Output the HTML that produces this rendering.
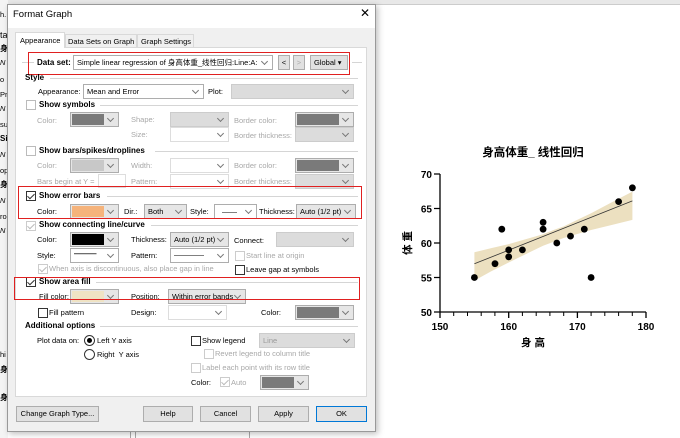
<!DOCTYPE html>
<html><head><meta charset="utf-8">
<style>
*{margin:0;padding:0;box-sizing:border-box}
body{width:680px;height:438px;overflow:hidden;background:#fff;position:relative;font-family:"Liberation Sans","Noto Sans CJK SC",sans-serif;font-size:7.5px;color:#000}
div{position:absolute}
.t{white-space:nowrap;line-height:10px}
.g{color:#a8a8a8}
.b{font-weight:bold;font-size:8px}
.cb{height:15px;border:1px solid #adadad;background:#fff;}
.cb.d{background:#dcdcdc;border-color:#ccc}
.cb:after{content:"";position:absolute;right:5px;top:3px;width:4px;height:4px;border-right:1px solid #777;border-bottom:1px solid #777;transform:rotate(45deg)}
.cb span{position:absolute;left:3px;top:2px;white-space:nowrap;line-height:10px}
.sw{height:15px;border:1px solid #adadad;background:#e6e6e6}
.sw i{position:absolute;left:1px;top:1px;bottom:1px;right:14px;display:block}
.sw:after{content:"";position:absolute;right:5px;top:3px;width:4px;height:4px;border-right:1px solid #777;border-bottom:1px solid #777;transform:rotate(45deg)}
.ck{width:10px;height:10px;border:1px solid #333;background:#fff}
.ck.d{border-color:#ccc}
.ck.c:after{content:"";position:absolute;left:2px;top:0px;width:3px;height:6px;border-right:1px solid #333;border-bottom:1px solid #333;transform:rotate(45deg)}
.ck.d.c:after{border-color:#bbb}
.hr{height:1px;background:#d5d5d5}
.red{border:1.5px solid #e02020}
.btn{height:16px;border:1px solid #adadad;background:#e1e1e1;text-align:center;line-height:14px}
</style></head><body>
<div style="left:0;top:0;width:680px;height:5px;background:#e8e8e8;border-bottom:1px solid #ccc"></div>
<div style="left:0;top:0;width:8px;height:438px;background:#f4f4f4"></div>
<div class="t" style="left:0;top:10px">h.</div>
<div class="t" style="left:0;top:30px;font-size:9px">ta</div>
<div class="t b" style="left:0;top:44px">身</div>
<div class="t" style="left:0;top:58px;font-style:italic">N</div>
<div class="t" style="left:0;top:75px">o</div>
<div class="t" style="left:0;top:90px">Pr</div>
<div class="t" style="left:0;top:104px;font-style:italic">N</div>
<div class="t" style="left:0;top:120px">su</div>
<div class="t b" style="left:0;top:134px">Si</div>
<div class="t" style="left:0;top:150px;font-style:italic">N</div>
<div class="t" style="left:0;top:166px">op</div>
<div class="t b" style="left:0;top:180px">身</div>
<div class="t" style="left:0;top:196px;font-style:italic">N</div>
<div class="t" style="left:0;top:212px">ro</div>
<div class="t" style="left:0;top:226px;font-style:italic">N</div>
<div class="t" style="left:0;top:350px">hi</div>
<div class="t b" style="left:0;top:365px">身</div>
<div class="t b" style="left:0;top:393px">身</div>
<div style="left:130px;top:430px;width:1px;height:8px;background:#aaa"></div>
<div style="left:135px;top:430px;width:115px;height:8px;border-left:1px solid #aaa;border-right:1px solid #aaa"></div>

<div style="left:7px;top:4px;width:369px;height:428px;background:#f0f0f0;border:1px solid #999;box-shadow:2px 2px 6px rgba(0,0,0,.25)"></div>
<div style="left:8px;top:5px;width:367px;height:23px;background:#fff"></div>
<div class="t" style="left:13px;top:10px;font-size:9.5px">Format Graph</div>
<div class="t" style="left:360px;top:8px;font-size:12px">✕</div>

<div style="left:15px;top:47px;width:352px;height:350px;background:#fff;border:1px solid #d9d9d9"></div>
<div style="left:15px;top:32px;width:50px;height:16px;background:#fff;border:1px solid #d9d9d9;border-bottom:none"></div>
<div class="t" style="left:20px;top:36px">Appearance</div>
<div style="left:65px;top:34px;width:72px;height:13px;background:#f0f0f0;border:1px solid #d9d9d9;border-bottom:none"></div>
<div class="t" style="left:68px;top:37px">Data Sets on Graph</div>
<div style="left:137px;top:34px;width:57px;height:13px;background:#f0f0f0;border:1px solid #d9d9d9;border-bottom:none"></div>
<div class="t" style="left:141px;top:37px">Graph Settings</div>

<div class="hr" style="left:22px;top:62px;width:340px"></div>
<div style="left:34px;top:55px;width:318px;height:16px;background:#fff"></div>
<div class="t b" style="left:37px;top:58px">Data set:</div>
<div class="cb" style="left:73px;top:55px;width:200px"><span>Simple linear regression of 身高体重_线性回归:Line:A:</span></div>
<div class="btn" style="left:278px;top:55px;width:12px;height:15px">&lt;</div>
<div class="btn" style="left:293px;top:55px;width:12px;height:15px;color:#aaa">&gt;</div>
<div class="btn" style="left:310px;top:55px;width:38px;height:15px;text-align:left;padding-left:3px">Global ▾</div>
<div class="red" style="left:28px;top:52px;width:322px;height:23px"></div>

<div class="t b" style="left:25px;top:73px">Style</div>
<div class="hr" style="left:50px;top:78px;width:308px"></div>
<div class="t" style="left:38px;top:87px">Appearance:</div>
<div class="cb" style="left:83px;top:84px;width:121px"><span>Mean and Error</span></div>
<div class="t" style="left:208px;top:87px">Plot:</div>
<div class="cb d" style="left:231px;top:84px;width:123px"></div>

<div class="ck" style="left:26px;top:100px;border-color:#bbb"></div>
<div class="t b" style="left:39px;top:100px">Show symbols</div>
<div class="hr" style="left:100px;top:105px;width:258px"></div>
<div class="t g" style="left:37px;top:116px">Color:</div>
<div class="sw" style="left:70px;top:112px;width:49px"><i style="background:#7a7a7a"></i></div>
<div class="t g" style="left:131px;top:115px">Shape:</div>
<div class="cb d" style="left:170px;top:112px;width:59px"></div>
<div class="t g" style="left:234px;top:116px">Border color:</div>
<div class="sw" style="left:295px;top:112px;width:59px"><i style="background:#7a7a7a"></i></div>
<div class="t g" style="left:131px;top:130px">Size:</div>
<div class="cb" style="left:170px;top:127px;width:59px;border-color:#ddd"></div>
<div class="t g" style="left:234px;top:131px">Border thickness:</div>
<div class="cb d" style="left:295px;top:127px;width:59px"></div>

<div class="ck" style="left:26px;top:146px;border-color:#bbb"></div>
<div class="t b" style="left:39px;top:146px">Show bars/spikes/droplines</div>
<div class="hr" style="left:155px;top:151px;width:203px"></div>
<div class="t g" style="left:37px;top:161px">Color:</div>
<div class="sw" style="left:70px;top:158px;width:49px"><i style="background:#c8c8c8"></i></div>
<div class="t g" style="left:131px;top:161px">Width:</div>
<div class="cb" style="left:170px;top:158px;width:59px;border-color:#ddd"></div>
<div class="t g" style="left:234px;top:161px">Border color:</div>
<div class="sw" style="left:295px;top:158px;width:59px"><i style="background:#7a7a7a"></i></div>
<div class="t g" style="left:37px;top:177px">Bars begin at Y =</div>
<div style="left:98px;top:174px;width:28px;height:14px;border:1px solid #ddd;background:#fff"></div>
<div class="t g" style="left:131px;top:177px">Pattern:</div>
<div class="cb" style="left:170px;top:174px;width:59px;border-color:#ddd"></div>
<div class="t g" style="left:234px;top:177px">Border thickness:</div>
<div class="cb d" style="left:295px;top:174px;width:59px"></div>

<div class="ck c" style="left:26px;top:191px"></div>
<div class="t b" style="left:39px;top:191px">Show error bars</div>
<div class="hr" style="left:107px;top:196px;width:251px"></div>
<div class="t" style="left:37px;top:207px">Color:</div>
<div class="sw" style="left:70px;top:204px;width:49px"><i style="background:#f5b37b"></i></div>
<div class="t" style="left:124px;top:207px">Dir.:</div>
<div class="cb" style="left:144px;top:204px;width:43px;background:#e6e6e6"><span>Both</span></div>
<div class="t" style="left:190px;top:207px">Style:</div>
<div class="cb" style="left:214px;top:204px;width:43px"><span style="left:7px">——</span></div>
<div class="t" style="left:259px;top:207px">Thickness:</div>
<div class="cb" style="left:296px;top:204px;width:60px;background:#e6e6e6"><span>Auto (1/2 pt)</span></div>
<div class="red" style="left:18px;top:186px;width:344px;height:33px"></div>

<div class="ck d c" style="left:26px;top:221px"></div>
<div class="t b" style="left:39px;top:220px">Show connecting line/curve</div>
<div class="hr" style="left:151px;top:225px;width:207px"></div>
<div class="t" style="left:37px;top:235px">Color:</div>
<div class="sw" style="left:70px;top:232px;width:49px"><i style="background:#000"></i></div>
<div class="t" style="left:131px;top:235px">Thickness:</div>
<div class="cb" style="left:170px;top:232px;width:59px;background:#e6e6e6"><span>Auto (1/2 pt)</span></div>
<div class="t" style="left:234px;top:236px">Connect:</div>
<div class="cb d" style="left:276px;top:232px;width:78px"></div>
<div class="t" style="left:37px;top:251px">Style:</div>
<div class="cb" style="left:70px;top:248px;width:49px"><span style="top:0;font-weight:bold">———</span></div>
<div class="t" style="left:131px;top:251px">Pattern:</div>
<div class="cb" style="left:170px;top:248px;width:59px"><span style="top:1px">————</span></div>
<div class="ck d" style="left:235px;top:251px"></div>
<div class="t g" style="left:246px;top:251px">Start line at origin</div>
<div class="ck d c" style="left:38px;top:264px"></div>
<div class="t g" style="left:49px;top:264px">When axis is discontinuous, also place gap in line</div>
<div class="ck" style="left:235px;top:265px"></div>
<div class="t" style="left:246px;top:265px">Leave gap at symbols</div>

<div class="ck c" style="left:26px;top:277px"></div>
<div class="t b" style="left:39px;top:277px">Show area fill</div>
<div class="hr" style="left:96px;top:282px;width:262px"></div>
<div class="t" style="left:39px;top:292px">Fill color:</div>
<div class="sw" style="left:70px;top:289px;width:49px"><i style="background:#efe3c4"></i></div>
<div class="t" style="left:131px;top:292px">Position:</div>
<div class="cb" style="left:168px;top:289px;width:78px;background:#e6e6e6"><span>Within error bands</span></div>
<div class="red" style="left:14px;top:277px;width:346px;height:23px"></div>

<div class="ck" style="left:38px;top:308px"></div>
<div class="t" style="left:49px;top:308px">Fill pattern</div>
<div class="t" style="left:131px;top:308px">Design:</div>
<div class="cb" style="left:168px;top:305px;width:59px;border-color:#ddd"></div>
<div class="t" style="left:261px;top:308px">Color:</div>
<div class="sw" style="left:295px;top:305px;width:59px"><i style="background:#7a7a7a"></i></div>

<div class="t b" style="left:25px;top:321px">Additional options</div>
<div class="hr" style="left:100px;top:326px;width:258px"></div>
<div class="t" style="left:37px;top:336px">Plot data on:</div>
<div style="left:84px;top:335px;width:11px;height:11px;border:1px solid #333;border-radius:50%;background:#fff"></div>
<div style="left:87px;top:338px;width:5px;height:5px;border-radius:50%;background:#000"></div>
<div class="t" style="left:97px;top:336px">Left Y axis</div>
<div style="left:84px;top:349px;width:11px;height:11px;border:1px solid #333;border-radius:50%;background:#fff"></div>
<div class="t" style="left:97px;top:350px">Right &nbsp;Y axis</div>
<div class="ck" style="left:191px;top:336px"></div>
<div class="t" style="left:202px;top:336px">Show legend</div>
<div class="cb d" style="left:259px;top:333px;width:96px"><span style="color:#999">Line</span></div>
<div class="ck d" style="left:204px;top:349px"></div>
<div class="t g" style="left:215px;top:349px">Revert legend to column title</div>
<div class="ck d" style="left:191px;top:363px"></div>
<div class="t g" style="left:202px;top:363px">Label each point with its row title</div>
<div class="t" style="left:191px;top:378px">Color:</div>
<div class="ck d c" style="left:220px;top:377px"></div>
<div class="t g" style="left:231px;top:378px">Auto</div>
<div class="sw" style="left:260px;top:375px;width:49px"><i style="background:#7a7a7a"></i></div>

<div class="btn" style="left:16px;top:406px;width:83px">Change Graph Type...</div>
<div class="btn" style="left:143px;top:406px;width:50px">Help</div>
<div class="btn" style="left:200px;top:406px;width:51px">Cancel</div>
<div class="btn" style="left:258px;top:406px;width:51px">Apply</div>
<div class="btn" style="left:316px;top:406px;width:51px;border:1.5px solid #0078d7">OK</div>

<svg style="position:absolute;left:0;top:0" width="680" height="438">
<text x="533" y="156" font-family="Liberation Sans,Noto Sans CJK SC,sans-serif" font-size="11.5" font-weight="bold" text-anchor="middle">身高体重_ 线性回归</text>
<path d="M474.4,252.3 Q491,248 508.7,244.1 Q526,239 543.1,234.2 Q553,230 563.7,226.4 Q577,220 591.1,213.3 Q612,202 632.4,191.6 L632.4,219.9 Q612,225 591.1,230 Q577,234 563.7,238 Q553,242 543.1,245.8 Q526,254 508.7,262.5 Q491,271 474.4,280.6 Z" fill="#ece0c0"/>
<line x1="474.4" y1="263.8" x2="632.4" y2="200.9" stroke="#333" stroke-width="0.8"/>
<g stroke="#000" stroke-width="1.3" fill="none">
<path d="M440,174 V312 H646"/>
<path d="M434,174H440M434,208.5H440M434,243H440M434,277.5H440M434,312H440"/>
<path d="M440,312v6M508.7,312v6M577.4,312v6M646,312v6"/>
</g>
<g stroke="#000" stroke-width="1">
<path d="M453.7,312v4M467.5,312v4M481.2,312v4M494.9,312v4M522.4,312v4M536.2,312v4M549.9,312v4M563.7,312v4M591.1,312v4M604.8,312v4M618.6,312v4M632.3,312v4"/>
</g>
<g fill="#000">
<circle cx="474.4" cy="277.5" r="3.4"/><circle cx="495" cy="263.7" r="3.4"/><circle cx="501.8" cy="229.2" r="3.4"/>
<circle cx="508.7" cy="256.8" r="3.4"/><circle cx="508.7" cy="249.9" r="3.4"/><circle cx="522.4" cy="249.9" r="3.4"/>
<circle cx="543.1" cy="222.3" r="3.4"/><circle cx="543.1" cy="229.2" r="3.4"/><circle cx="556.8" cy="243" r="3.4"/>
<circle cx="570.5" cy="236.1" r="3.4"/><circle cx="584.3" cy="229.2" r="3.4"/><circle cx="591.1" cy="277.5" r="3.4"/>
<circle cx="618.6" cy="201.6" r="3.4"/><circle cx="632.4" cy="187.8" r="3.4"/>
</g>
<g font-family="Liberation Sans,sans-serif" font-size="10" font-weight="bold" text-anchor="end">
<text x="432" y="178">70</text><text x="432" y="212.5">65</text><text x="432" y="247">60</text><text x="432" y="281.5">55</text><text x="432" y="316">50</text>
</g>
<g font-family="Liberation Sans,sans-serif" font-size="10" font-weight="bold" text-anchor="middle">
<text x="440" y="330">150</text><text x="508.7" y="330">160</text><text x="577.4" y="330">170</text><text x="646" y="330">180</text>
</g>
<text x="533" y="346" font-family="Liberation Sans,Noto Sans CJK SC,sans-serif" font-size="10.5" font-weight="bold" text-anchor="middle">身 高</text>
<text transform="translate(411,243) rotate(-90)" font-family="Liberation Sans,Noto Sans CJK SC,sans-serif" font-size="10.5" font-weight="bold" text-anchor="middle">体 重</text>
</svg>
</body></html>
